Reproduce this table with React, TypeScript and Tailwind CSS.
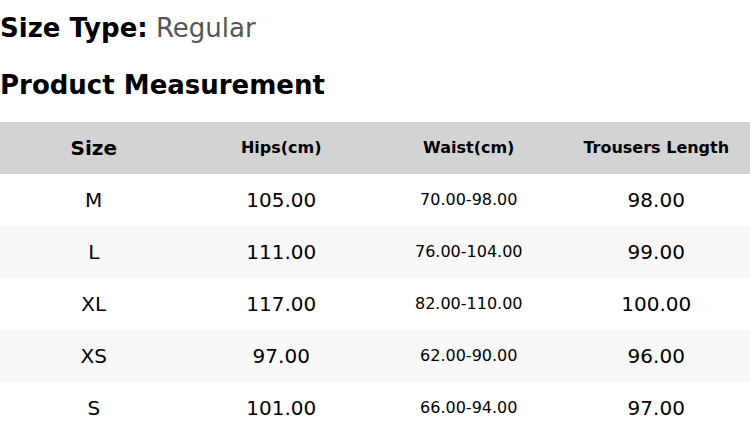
import React from "react";

const rows = [
  { size: "M", hips: "105.00", waist: "70.00-98.00", length: "98.00" },
  { size: "L", hips: "111.00", waist: "76.00-104.00", length: "99.00" },
  { size: "XL", hips: "117.00", waist: "82.00-110.00", length: "100.00" },
  { size: "XS", hips: "97.00", waist: "62.00-90.00", length: "96.00" },
  { size: "S", hips: "101.00", waist: "66.00-94.00", length: "97.00" },
];

const App: React.FC = () => {
  return (
    <div className="w-[750px] bg-white text-black font-['DejaVu_Sans',sans-serif]">
      <h2 className="pt-[13px] text-[26px] leading-[30px]">
        <span className="font-bold">Size Type:</span>{" "}
        <span className="text-[#555]">Regular</span>
      </h2>
      <h2 className="mt-[27px] text-[26px] leading-[30px] font-bold">
        Product Measurement
      </h2>

      <table className="mt-[22px] w-full table-fixed border-collapse">
        <thead>
          <tr className="h-[52px] bg-[#d3d3d3] font-bold">
            <th className="text-[20px]">Size</th>
            <th className="text-[16px]">Hips(cm)</th>
            <th className="text-[16px]">Waist(cm)</th>
            <th className="text-[16px]">Trousers Length</th>
          </tr>
        </thead>
        <tbody>
          {rows.map((row, i) => (
            <tr
              key={row.size}
              className={`h-[52px] text-center ${
                i % 2 === 1 ? "bg-[#f8f8f8]" : "bg-white"
              }`}
            >
              <td className="text-[20px]">{row.size}</td>
              <td className="text-[20px]">{row.hips}</td>
              <td className="text-[16px]">{row.waist}</td>
              <td className="text-[20px]">{row.length}</td>
            </tr>
          ))}
        </tbody>
      </table>
    </div>
  );
};

export default App;
